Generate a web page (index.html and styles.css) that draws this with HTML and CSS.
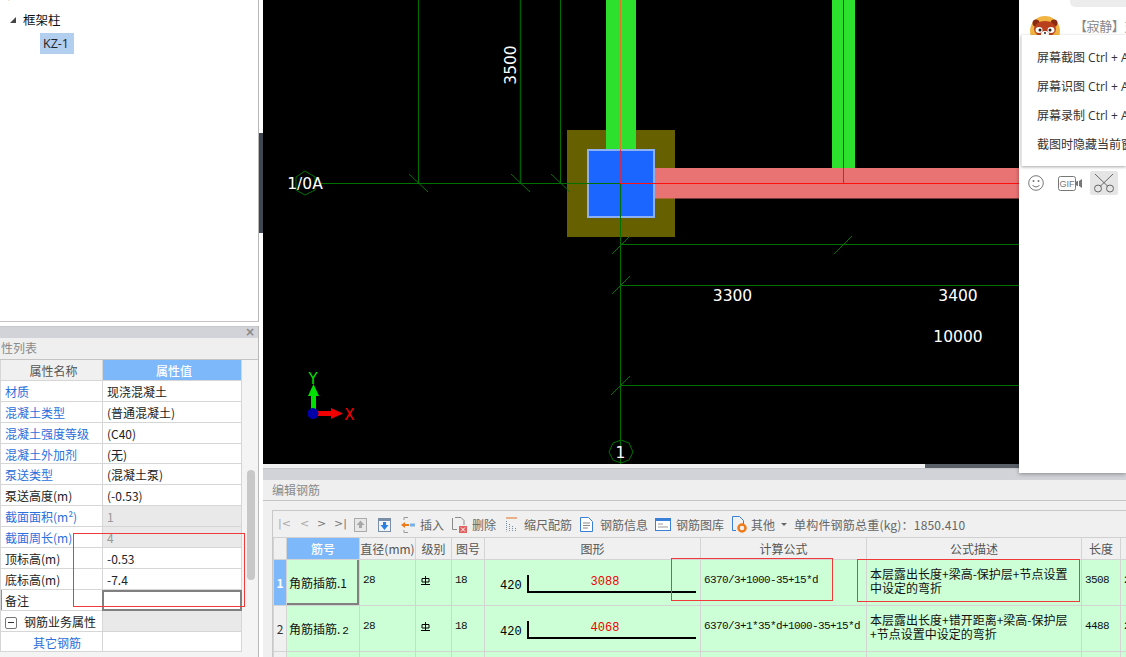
FILE: index.html
```html
<!DOCTYPE html>
<html lang="zh">
<head>
<meta charset="utf-8">
<title>编辑钢筋</title>
<link rel="stylesheet" href="styles.css">
</head>
<body>
<div class="app">
  <aside class="left">
    <div class="tree">
      <div class="tree-clip">柱</div>
      <div class="tree-row"><span class="tri"></span>框架柱</div>
      <div class="tree-leaf"><span class="leaf-sel">KZ-1</span></div>
    </div>
    <div class="props">
      <div class="band"><span class="close">×</span></div>
      <div class="title title-left">性列表</div>
      <div class="prop-body">
        <div class="prop-table">
          <div class="prow phead"><div class="pname">属性名称</div><div class="pval">属性值</div></div>
          <div class="prow"><div class="pname link">材质</div><div class="pval">现浇混凝土</div></div>
          <div class="prow"><div class="pname link">混凝土类型</div><div class="pval">(普通混凝土)</div></div>
          <div class="prow"><div class="pname link">混凝土强度等级</div><div class="pval">(C40)</div></div>
          <div class="prow"><div class="pname link">混凝土外加剂</div><div class="pval">(无)</div></div>
          <div class="prow"><div class="pname link">泵送类型</div><div class="pval">(混凝土泵)</div></div>
          <div class="prow"><div class="pname">泵送高度(m)</div><div class="pval">(-0.53)</div></div>
          <div class="prow"><div class="pname link">截面面积(m²)</div><div class="pval off">1</div></div>
          <div class="prow"><div class="pname link">截面周长(m)</div><div class="pval off">4</div></div>
          <div class="prow"><div class="pname">顶标高(m)</div><div class="pval">-0.53</div></div>
          <div class="prow"><div class="pname">底标高(m)</div><div class="pval">-7.4</div></div>
          <div class="prow"><div class="pname marked">备注</div><div class="pval picked"></div></div>
          <div class="prow"><div class="pname"><span class="minus"></span>钢筋业务属性</div><div class="pval shade"></div></div>
          <div class="prow"><div class="pname link sub">其它钢筋</div><div class="pval"></div></div>
        </div>
        <div class="vscroll"><div class="thumb"></div></div>
      </div>
    </div>
    <div class="mark mark-props"></div>
  </aside>
  <div class="gutter"><div class="grip"></div></div>
  <main class="right">
    <div class="canvas">
      <svg class="cad" width="756" height="464" viewBox="263 0 756 464">
        <rect x="567" y="130" width="108" height="107" fill="#666000"/>
        <rect x="606" y="0" width="30" height="150" fill="#2de02d"/>
        <rect x="832" y="0" width="23" height="168" fill="#2de02d"/>
        <rect x="655" y="168" width="364" height="30.500" fill="#e97373"/>
        <rect x="588" y="150" width="66" height="67" fill="#1a66ff" stroke="#8cb0f0" stroke-width="2"/>
        <g stroke="#007000" stroke-width="1" fill="none">
          <path d="M418.500 0V183M560.500 0V183"/>
          <path d="M520.500 0V183" stroke="#005c00" stroke-width="1.500"/>
          <path d="M321 183.500H620M620.500 183V464M620 244.500H1019M620 285.500H1019M620 385.500H1019"/>
          <path d="M409 174L428 192M511 174L530 192M551 174L570 192"/>
          <path d="M612 254L630 236M834 254L852 236M612 294L630 276M611 395L630 376"/>
          <path d="M843.500 0V168" stroke="#0a5a0a"/>
          <path d="M305 171L315 177V190L305 195L296 190V177Z"/>
          <path d="M621 440L629 443L633 452L629 460L621 463L613 460L609 452L613 443Z"/>
        </g>
        <path d="M620.500 0V150" stroke="#e0782a"/>
        <path d="M620.500 150V183" stroke="#c0305a"/>
        <path d="M620 183.500H1019M843.500 168V183" stroke="#ff1010" fill="none"/>
        <rect x="311" y="395" width="5" height="16" fill="#00e000"/>
        <path d="M313.500 384L319 396H308Z" fill="#00e000"/>
        <rect x="316" y="411" width="16" height="5" fill="#f00000"/>
        <path d="M343 413.500L331 408V419Z" fill="#f00000"/>
        <circle cx="313" cy="413.500" r="5.500" fill="#0000a8"/>
        <text class="cad-sm" x="313" y="384" fill="#00e000" text-anchor="middle">Y</text>
        <text class="cad-sm" x="349.500" y="420" fill="#f00000" text-anchor="middle">X</text>
        <g class="cad-t" fill="#fff" text-anchor="middle">
          <text transform="translate(516 65) rotate(-90)">3500</text>
          <text x="305" y="189">1/0A</text>
          <text x="732.500" y="301">3300</text>
          <text x="958" y="301">3400</text>
          <text x="958" y="342">10000</text>
          <text x="620.500" y="458">1</text>
        </g>
      </svg>
    </div>
    <section class="editor">
      <div class="band"></div>
      <div class="title">编辑钢筋</div>
      <div class="editor-body">
        <div class="grid-box">
          <div class="toolbar">
            <span class="nav n1">|&lt;</span><span class="nav n2">&lt;</span><span class="nav n3">&gt;</span><span class="nav n4">&gt;|</span>
            <svg class="ic i-up" width="13" height="14" viewBox="0 0 13 14"><rect x=".5" y=".5" width="12" height="13" fill="#e8e8e8" stroke="#aaa"/><path d="M6.500 2.500L10.500 7H8V10H5V7H2.500Z" fill="#a8a8a8"/></svg>
            <svg class="ic i-down" width="13" height="14" viewBox="0 0 13 14"><rect x=".5" y=".5" width="12" height="13" fill="#f0f4fa" stroke="#7a8ea8"/><rect x="1" y="1" width="11" height="2" fill="#7a8ea8"/><path d="M6.500 12L10.500 7H8V4H5V7H2.500Z" fill="#2a80e0"/></svg>
            <span class="tool t-ins"><svg width="14" height="16" viewBox="0 0 14 16"><path d="M3 .5H7M3 15.500H7M3 .5V3M3 13V15.500" stroke="#999" fill="none"/><path d="M0 8L4 5V7H8V9H4V11Z" fill="#ee7a1a"/><rect x="9" y="6.500" width="5" height="3" fill="#7ab0e8"/></svg>插入</span>
            <span class="tool t-del"><svg width="15" height="16" viewBox="0 0 15 16"><path d="M.5 1V12.500H5M3 .5H9L12 3.500V8" stroke="#8a8a8a" fill="none"/><rect x="7" y="9" width="8" height="7" fill="#e06060"/><path d="M9 10.500L13 14.500M13 10.500L9 14.500" stroke="#fff"/></svg>删除</span>
            <span class="tool t-scale"><svg width="13" height="15" viewBox="0 0 13 15"><path d="M1 1H12" stroke="#e07020"/><path d="M1.500 4V14.500M4.500 7V14.500M7.500 9V14.500M10.500 11V14.500" stroke="#7a8ea8" stroke-dasharray="1 1"/></svg>缩尺配筋</span>
            <span class="tool t-info"><svg width="13" height="15" viewBox="0 0 13 15"><path d="M.5.5H8.500L12.500 4.500V14.500H.5Z" fill="#fff" stroke="#3a80d8"/><path d="M3 6H10M3 8.500H10M3 11H8" stroke="#888"/></svg>钢筋信息</span>
            <span class="tool t-lib"><svg width="16" height="13" viewBox="0 0 16 13"><rect x=".5" y=".5" width="15" height="12" fill="#fff" stroke="#3a80d8"/><rect x="1" y="1" width="14" height="2" fill="#3a80d8"/><path d="M3 6H8M3 9H13" stroke="#999"/></svg>钢筋图库</span>
            <span class="tool t-other"><svg width="15" height="17" viewBox="0 0 15 17"><path d="M.5.5H7.500L11.500 4.500V9M.5.5V14.500H4" fill="none" stroke="#3a80d8"/><circle cx="10" cy="12" r="3.500" fill="none" stroke="#ee7a1a" stroke-width="2.500"/></svg>其他</span>
            <span class="caret"></span>
            <span class="total">单构件钢筋总重(kg)：1850.410</span>
          </div>
          <table class="rebar">
            <colgroup>
              <col class="c0"><col class="c1"><col class="c2"><col class="c3"><col class="c4"><col class="c5"><col class="c6"><col class="c7"><col class="c8"><col class="c9">
            </colgroup>
            <thead>
              <tr><th></th><th class="active">筋号</th><th>直径(mm)</th><th>级别</th><th>图号</th><th>图形</th><th>计算公式</th><th>公式描述</th><th>长度</th><th></th></tr>
            </thead>
            <tbody>
              <tr>
                <td class="num num-on">1</td>
                <td class="name name-on">角筋插筋.1</td>
                <td class="mono">28</td>
                <td class="grade"><svg width="9" height="9" viewBox="0 0 9 9"><path d="M4.500 0V9M1 2.500H8V6H1ZM0 8.500H9" stroke="#000" fill="none"/></svg></td>
                <td class="mono">18</td>
                <td class="shape"><svg width="215" height="45" viewBox="0 0 215 45"><text class="sh-t" x="15" y="29" fill="#000">420</text><path d="M43 15V32H211" fill="none" stroke="#000" stroke-width="2"/><text class="sh-t" x="120" y="25" fill="#f00000" text-anchor="middle">3088</text></svg></td>
                <td class="mono">6370/3+1000-35+15*d</td>
                <td class="desc">本层露出长度+梁高-保护层+节点设置中设定的弯折</td>
                <td class="mono">3508</td>
                <td class="mono">2</td>
              </tr>
              <tr>
                <td class="num">2</td>
                <td class="name">角筋插筋.<span class="mono-in">2</span></td>
                <td class="mono">28</td>
                <td class="grade"><svg width="9" height="9" viewBox="0 0 9 9"><path d="M4.500 0V9M1 2.500H8V6H1ZM0 8.500H9" stroke="#000" fill="none"/></svg></td>
                <td class="mono">18</td>
                <td class="shape"><svg width="215" height="45" viewBox="0 0 215 45"><text class="sh-t" x="15" y="29" fill="#000">420</text><path d="M43 15V32H211" fill="none" stroke="#000" stroke-width="2"/><text class="sh-t" x="120" y="25" fill="#f00000" text-anchor="middle">4068</text></svg></td>
                <td class="mono">6370/3+1*35*d+1000-35+15*d</td>
                <td class="desc">本层露出长度+错开距离+梁高-保护层+节点设置中设定的弯折</td>
                <td class="mono">4488</td>
                <td class="mono">2</td>
              </tr>
              <tr class="stub"><td class="num"></td><td></td><td></td><td></td><td></td><td></td><td></td><td></td><td></td><td></td></tr>
            </tbody>
          </table>
        </div>
      </div>
      <div class="hbar"></div>
    </section>
  </main>
  <div class="mark mark-a"></div>
  <div class="mark mark-b"></div>
  <div class="chat">
    <div class="bubble"></div>
    <div class="msg-head">
      <svg class="avatar" width="30" height="30" viewBox="0 0 30 30"><circle cx="15" cy="15" r="15" fill="#f2b544"/><circle cx="6" cy="7" r="3.500" fill="#8a2a12"/><circle cx="24" cy="7" r="3.500" fill="#8a2a12"/><ellipse cx="15" cy="13" rx="11" ry="8" fill="#b8401c"/><ellipse cx="9" cy="14" rx="3.500" ry="3" fill="#fff"/><ellipse cx="21" cy="14" rx="3.500" ry="3" fill="#fff"/><circle cx="10" cy="14" r="1.500" fill="#222"/><circle cx="20" cy="14" r="1.500" fill="#222"/><ellipse cx="15" cy="18" rx="4" ry="3" fill="#fff"/><circle cx="15" cy="17" r="1" fill="#222"/></svg>
      <span class="msg-name">【寂静】对</span>
    </div>
    <div class="menu">
      <div class="menu-item">屏幕截图 Ctrl + Alt + A</div>
      <div class="menu-item">屏幕识图 Ctrl + Alt + O</div>
      <div class="menu-item">屏幕录制 Ctrl + Alt + S</div>
      <div class="menu-item">截图时隐藏当前窗口</div>
    </div>
    <div class="chat-tools">
      <svg width="16" height="16" viewBox="0 0 16 16"><circle cx="8" cy="8" r="7.300" fill="none" stroke="#777"/><circle cx="5.500" cy="6" r="1" fill="#777"/><circle cx="10.500" cy="6" r="1" fill="#777"/><path d="M4.500 10C6 12.500 10 12.500 11.500 10" fill="none" stroke="#777"/></svg>
      <svg class="gif" width="24" height="15" viewBox="0 0 24 15"><rect x=".5" y=".5" width="17" height="14" rx="2" fill="none" stroke="#777"/><text class="gif-t" x="9" y="11" fill="#777" text-anchor="middle">GIF</text><path d="M18 6L19 5H20V10H19L18 9ZM21 5L24 3V12L21 10Z" fill="#777"/></svg>
      <span class="scissors"><svg width="22" height="20" viewBox="0 0 22 20"><path d="M2 1L15 13.500M20 1L7 13.500" stroke="#666" fill="none"/><circle cx="5" cy="15.500" r="3.500" fill="none" stroke="#666"/><circle cx="17" cy="15.500" r="3.500" fill="none" stroke="#666"/></svg></span>
    </div>
  </div>
</div>
</body>
</html>
```

FILE: styles.css
```css
* { box-sizing: border-box; }
html, body { margin: 0; padding: 0; height: 100%; overflow: hidden; background: #fff; }
body { font: 12px "Noto Sans CJK SC", "Noto Sans", sans-serif; color: #111; }

.app { position: relative; display: flex; width: 1126px; height: 657px; overflow: hidden; }

/* left column */
.left { width: 259px; flex: none; display: flex; flex-direction: column; }
.tree { height: 322px; flex: none; border-right: 1px solid #b8b8b8; border-bottom: 1px solid #c4c4c4; overflow: hidden; }
.tree-clip { height: 9px; margin-top: -14px; padding-left: 6px; line-height: 16px; font-size: 12px; }
.tree-row { display: flex; align-items: center; height: 21px; margin-top: 14px; padding-left: 10px; line-height: 21px; font-size: 12.500px; }
.tri { width: 0; height: 0; margin-right: 7px; border-style: solid; border-width: 0 0 6px 6px; border-color: transparent transparent #444 transparent; }
.tree-leaf { height: 21px; margin-top: 3px; padding-left: 40px; }
.leaf-sel { display: inline-block; width: 34px; height: 21px; padding-left: 3px; background: #b3cff0; font: 12.500px/21px "Open Sans", sans-serif; color: #222; }

.props { flex: 1; margin-top: 4px; border-right: 1px solid #b8b8b8; display: flex; flex-direction: column; min-height: 0; }
.band { height: 12px; flex: none; background: #d2d3d8; border-top: 1px solid #c6c7cb; display: flex; justify-content: flex-end; }
.close { width: 12px; margin-right: 1px; font: bold 12px/10px "DejaVu Sans", sans-serif; color: #888; }
.title { height: 21px; flex: none; padding-left: 9px; background: #efefef; border-bottom: 1px solid #c4c4c4; line-height: 20px; color: #8a8a8a; font-size: 12px; }
.title-left { height: 22px; padding-left: 1px; line-height: 20px; }

.prop-body { display: flex; flex: 1; min-height: 0; background: #f4f4f4; }
.prop-table { width: 242px; flex: none; }
.prow { display: flex; height: 20.900px; }
.pname, .pval { border-bottom: 1px solid #d6d6d6; background: #fff; padding-left: 4px; line-height: 21px; font-size: 12px; white-space: nowrap; overflow: hidden; }
.pname { width: 102px; flex: none; border-left: 1px solid #d6d6d6; color: #222; }
.pval { flex: 1; border-left: 1px solid #d6d6d6; border-right: 1px solid #d6d6d6; color: #222; }
.phead .pname { background: #f0f0f0; text-align: center; color: #555; }
.phead .pval { background: #7db8fa; text-align: center; color: #fff; font-weight: 500; }
.link { color: #2a6fdb; }
.off { background: #e9e9e9; color: #999; }
.shade { background: #e9e9e9; }
.picked { border: 2px solid #808080; }
.marked { box-shadow: inset 1px 0 0 #5a9ae8; }
.minus { display: inline-block; position: relative; width: 12px; height: 12px; margin-right: 7px; vertical-align: -2px; border: 1px solid #777; border-radius: 2px; background: #fff; }
.minus::after { content: ""; position: absolute; left: 2px; top: 4px; width: 6px; height: 1px; background: #333; }
.sub { padding-left: 32px; }
.vscroll { flex: 1; padding: 110px 3px 0 5px; }
.thumb { width: 8px; height: 110px; border-radius: 4px; background: #c8c8c8; }

/* gutter */
.gutter { width: 4px; flex: none; display: flex; align-items: flex-start; padding-top: 133px; }
.grip { width: 4px; height: 100px; background: #3f4650; }

/* right column */
.right { flex: 1; min-width: 0; display: flex; flex-direction: column; }
.canvas { height: 464px; flex: none; background: #000; overflow: hidden; }
.cad { display: block; }
.cad-t { font: 15.500px "DejaVu Sans", sans-serif; }
.cad-sm { font: 15px "DejaVu Sans", sans-serif; }

.editor { position: relative; flex: 1; min-height: 0; background: #f0f0f0; overflow: hidden; padding-top: 4px; background-clip: padding-box; }
.editor .band { border-top: 1px solid #c6c7cb; }
.editor-body { padding: 9px 0 0 9px; }
.grid-box { border: 1px solid #c8c8c8; border-right: 0; background: #f0f0f0; }
.hbar { position: absolute; left: 662px; top: 0; width: 94px; height: 4px; background: #5a6068; }

.toolbar { position: relative; height: 27px; background: #f0f0f0; border-bottom: 1px solid #d0d0d0; color: #666; }
.nav { position: absolute; top: 5px; font: 11px/16px "DejaVu Sans", sans-serif; color: #777; }
.n1 { left: 5px; color: #aaa; }
.n2 { left: 27px; color: #aaa; }
.n3 { left: 44px; }
.n4 { left: 61px; }
.ic { position: absolute; top: 7px; }
.i-up { left: 81px; }
.i-down { left: 105px; }
.tool { position: absolute; top: 3px; display: flex; align-items: center; gap: 5px; height: 21px; white-space: nowrap; }
.t-ins { left: 128px; }
.t-del { left: 179px; }
.t-scale { left: 232px; gap: 6px; }
.t-info { left: 307px; gap: 7px; }
.t-lib { left: 382px; gap: 5px; }
.t-other { left: 459px; gap: 4px; }
.caret { position: absolute; left: 508px; top: 12px; width: 0; height: 0; border: 3px solid transparent; border-top: 3px solid #666; }
.total { position: absolute; left: 521px; top: 3px; line-height: 21px; white-space: nowrap; letter-spacing: .2px; }

.rebar { table-layout: fixed; width: 856px; border-collapse: collapse; background: #ccffd6; }
.c0 { width: 13px; } .c1 { width: 73px; } .c2 { width: 56px; } .c3 { width: 36px; } .c4 { width: 33px; }
.c5 { width: 216px; } .c6 { width: 166px; } .c7 { width: 215px; } .c8 { width: 39px; } .c9 { width: 9px; }
.rebar th { height: 21px; padding: 0; background: #f0f0f0; border: 1px solid #d4d4d4; border-top: 0; font-weight: 400; color: #555; font-size: 12px; white-space: nowrap; overflow: hidden; }
.rebar th.active { background: #7db8fa; color: #fff; font-weight: 500; }
.rebar td { height: 46px; padding: 0 3px; border: 1px solid #d4d4d4; color: #111; vertical-align: middle; overflow: hidden; white-space: nowrap; }
.rebar .stub td { height: 6px; }
.rebar .num { padding: 0; background: #f0f0f0; text-align: center; font-size: 12px; color: #333; }
.rebar .num-on { background: #7db8fa; color: #fff; font-weight: 700; }
.rebar .name { padding-left: 2px; font-size: 12px; }
.rebar .name-on { box-shadow: inset -2px -2px 0 #808080; }
.mono-in { margin-left: 2px; font: 11px "Liberation Mono", monospace; }
.rebar .mono { font: 11px "Liberation Mono", monospace; letter-spacing: -.6px; padding-bottom: 4px; }
.rebar .grade { padding: 0 0 4px 5px; }
.grade svg { display: block; }
.rebar .shape { padding: 0; }
.shape svg { display: block; }
.sh-t { font: 12px "Liberation Mono", monospace; }
.rebar .desc { padding: 0 3px 2px 3px; white-space: normal; font-size: 12px; line-height: 14px; }

/* annotation rectangles and floating chat window */
.mark { position: absolute; border: 1px solid #f03a3a; pointer-events: none; }
.mark-props { left: 73px; top: 533px; width: 172px; height: 74px; }
.mark-a { left: 671px; top: 558px; width: 162px; height: 43px; }
.mark-b { left: 857px; top: 559px; width: 223px; height: 43px; }

.chat { position: absolute; left: 1019px; top: 0; width: 107px; height: 473px; background: #fff; box-shadow: 0 1px 4px rgba(0,0,0,.35); }
.bubble { position: absolute; left: 51px; top: -6px; width: 60px; height: 13px; border-radius: 5px; background: #ececec; }
.msg-head { position: absolute; left: 11px; top: 16px; display: flex; white-space: nowrap; }
.avatar { flex: none; }
.msg-name { margin-left: 14px; line-height: 20px; color: #888; font-size: 13px; letter-spacing: -.4px; }
.menu { position: absolute; left: 2px; top: 35px; width: 105px; height: 131px; padding-top: 9px; background: #fff; border-left: 1px solid #dfe6ee; box-shadow: 0 1px 3px rgba(0,0,0,.35); overflow: hidden; }
.menu-item { height: 29px; padding-left: 15px; font: 12px/28px "Open Sans", "Noto Sans CJK SC", sans-serif; white-space: nowrap; color: #333; }
.chat-tools { position: absolute; left: 9px; top: 171px; display: flex; align-items: center; height: 24px; }
.gif { margin-left: 14px; }
.gif-t { font: 9px "Liberation Sans", sans-serif; }
.scissors { display: flex; align-items: center; justify-content: center; width: 28px; height: 24px; margin-left: 8px; background: #e5e5e5; border-radius: 2px; }
```
